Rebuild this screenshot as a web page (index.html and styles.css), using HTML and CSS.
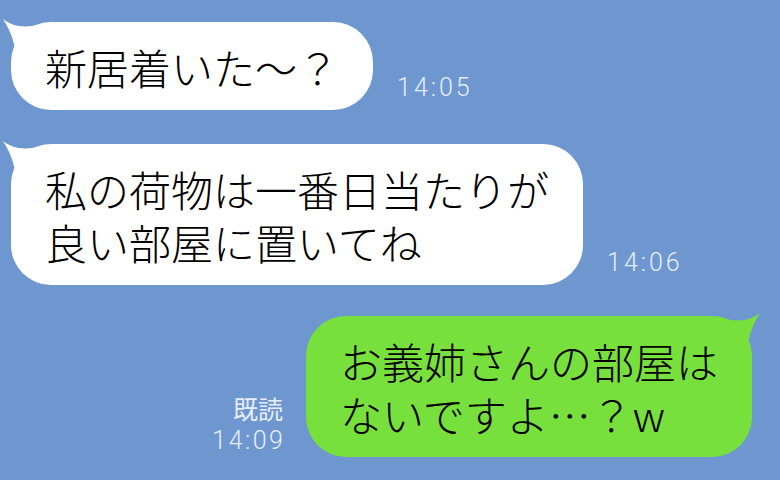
FILE: index.html
```html
<!DOCTYPE html>
<html lang="ja">
<head>
    <meta charset="UTF-8">
    <meta name="viewport" content="width=device-width, initial-scale=1.0">
    <title>トーク</title>
    <link rel="stylesheet" href="styles.css">
</head>
<body>
    <div class="chat">
        <!-- 相手のメッセージ -->
        <div class="row left first">
            <div class="bubble white">
                <svg class="tail" viewBox="0 0 40 40"><path d="M2 3 Q 14 13 34 9.5 L 30 30 L 13.5 30 Q 10 15 2 3 Z"/></svg>
                新居着いた～？
            </div>
            <span class="time">14:05</span>
        </div>

        <div class="row left">
            <div class="bubble white">
                <svg class="tail" viewBox="0 0 40 40"><path d="M2 3 Q 14 13 34 9.5 L 30 30 L 13.5 30 Q 10 15 2 3 Z"/></svg>
                私の荷物は一番日当たりが<br>良い部屋に置いてね
            </div>
            <span class="time">14:06</span>
        </div>

        <!-- 自分のメッセージ -->
        <div class="row right">
            <div class="read">
                <span class="read-label">既読</span>
                <span class="time">14:09</span>
            </div>
            <div class="bubble green">
                <svg class="tail" viewBox="0 0 40 40"><path d="M38 3 Q 26 13 6 9.5 L 10 30 L 26.5 30 Q 30 15 38 3 Z"/></svg>
                お義姉さんの部屋は<br>ないですよ…？w
            </div>
        </div>
    </div>
</body>
</html>
```

FILE: styles.css
```css
body {
    margin: 0;
    background-color: #6f97cf;
    font-family: "Noto Sans CJK JP", "Noto Sans", sans-serif;
    width: 780px;
    height: 480px;
    overflow: hidden;
}
.chat {
    display: flex;
    flex-direction: column;
    padding: 22px 28px 0 11px;
}
.row {
    display: flex;
    align-items: flex-end;
    gap: 24px;
    margin-top: 34px;
}
.row.first {
    margin-top: 0;
}
.row.right {
    justify-content: flex-end;
    margin-top: 31px;
    gap: 23px;
}
.bubble {
    position: relative;
    padding: 17.5px 34px;
    border-radius: 40px;
    font-size: 42px;
    font-weight: 300;
    line-height: 53px;
    color: #000;
    white-space: nowrap;
}
.bubble.white {
    background-color: #fff;
}
.bubble.green {
    background-color: #78e03d;
}
.tail {
    position: absolute;
    top: -6px;
    width: 40px;
    height: 40px;
}
.white .tail {
    left: -10px;
    fill: #fff;
}
.green .tail {
    right: -10px;
    fill: #78e03d;
}
.time {
    font-family: Roboto, "Noto Sans", sans-serif;
    font-weight: 300;
    font-size: 25px;
    line-height: 25px;
    letter-spacing: 3px;
    color: #e6edf8;
    margin-bottom: 10px;
}
.read {
    display: flex;
    flex-direction: column;
    align-items: flex-end;
    margin-bottom: 4px;
}
.read .time {
    margin-bottom: 0;
    letter-spacing: 2.5px;
    margin-right: -2.5px;
}
.read-label {
    font-size: 25px;
    line-height: 25px;
    margin-bottom: 7px;
    color: #e6edf8;
}
```
